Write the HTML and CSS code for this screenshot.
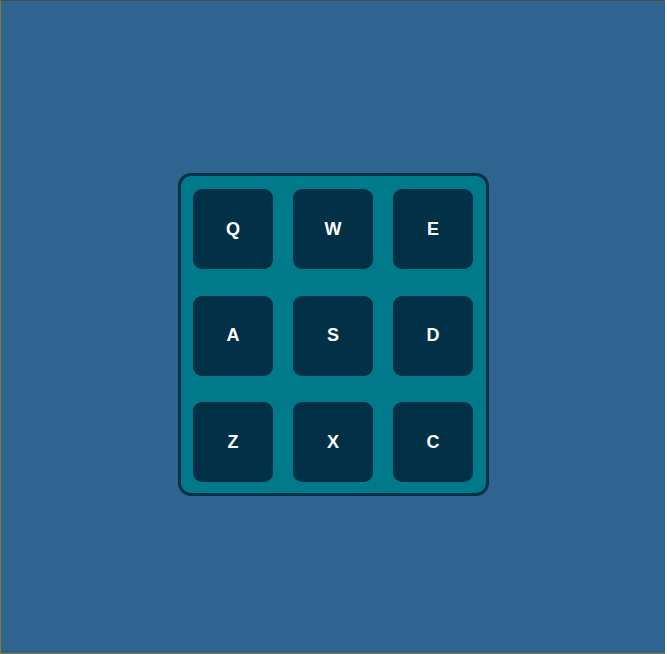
FILE: index.html
```html
<!DOCTYPE html>
<html>
<head>
<meta charset="utf-8">
<link rel="stylesheet" href="styles.css">
</head>
<body>
<div class="frame">
  <div class="pad">
    <div class="key">Q</div>
    <div class="key">W</div>
    <div class="key">E</div>
    <div class="key">A</div>
    <div class="key">S</div>
    <div class="key">D</div>
    <div class="key">Z</div>
    <div class="key">X</div>
    <div class="key">C</div>
  </div>
</div>
</body>
</html>
```
FILE: styles.css
```css
html, body {
  margin: 0;
  padding: 0;
  background: #ffffff;
}
.frame {
  box-sizing: border-box;
  width: 665px;
  height: 654px;
  background: #2f6490;
  border-top: 1px solid #4a4a4a;
  border-left: 1px solid #8a7a2a;
  border-bottom: 1px solid #8a7a2a;
  display: flex;
  align-items: flex-start;
  justify-content: center;
  padding-top: 172px;
}
.pad {
  box-sizing: border-box;
  width: 311px;
  height: 323px;
  margin-left: 1px;
  background: #007a8a;
  border: 3px solid #023047;
  border-radius: 13px;
  padding: 13px 12px;
  display: grid;
  grid-template-columns: repeat(3, 80px);
  grid-template-rows: repeat(3, 80px);
  column-gap: 20px;
  row-gap: 26.5px;
}
.key {
  background: #023047;
  border-radius: 9px;
  color: #ffffff;
  font-family: "Liberation Sans", Arial, sans-serif;
  font-weight: bold;
  font-size: 18px;
  display: flex;
  align-items: center;
  justify-content: center;
}
```
